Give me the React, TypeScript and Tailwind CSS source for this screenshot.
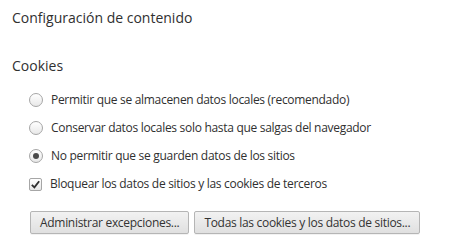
import type { ReactNode } from "react"

type Option = {
  label: string
  checked?: boolean
}

const radios: Option[] = [
  { label: "Permitir que se almacenen datos locales (recomendado)" },
  { label: "Conservar datos locales solo hasta que salgas del navegador" },
  { label: "No permitir que se guarden datos de los sitios", checked: true },
]

function Radio({ checked }: { checked?: boolean }) {
  return (
    <span className="flex h-[14px] w-[14px] shrink-0 items-center justify-center rounded-full border border-[#a6a6a6] bg-linear-to-b from-white to-[#e8e8e8]">
      {checked && <span className="h-[6px] w-[6px] rounded-full bg-[#4a4a4a]" />}
    </span>
  )
}

function Checkbox() {
  return (
    <span className="flex h-[13px] w-[13px] shrink-0 items-center justify-center rounded-[2px] border border-[#a6a6a6] bg-linear-to-b from-white to-[#e6e6e6]">
      <svg viewBox="0 0 12 12" className="h-[11px] w-[11px]">
        <path d="M2 6.5 L4.8 9.2 L10 2.5" fill="none" stroke="#2e2e2e" strokeWidth="2" />
      </svg>
    </span>
  )
}

function Row({ control, children }: { control: ReactNode; children: ReactNode }) {
  return (
    <div className="flex h-7 items-center gap-2 pl-[17px]">
      {control}
      <span>{children}</span>
    </div>
  )
}

function Button({ children }: { children: ReactNode }) {
  return (
    <button className="h-[23px] whitespace-nowrap rounded-[2px] border border-[#b5b5b5] bg-linear-to-b from-[#f2f2f2] to-[#e0e0e0] px-[9px] text-[12px] leading-none tracking-[-0.3px] text-[#333] shadow-[0_1px_0_rgba(0,0,0,0.05)]">
      {children}
    </button>
  )
}

export default function App() {
  return (
    <div className="h-[250px] w-[450px] bg-white px-3 pt-2 font-['Open_Sans',sans-serif] text-[12px] text-[#303030]">
      <h1 className="text-[14px] leading-5 font-normal">Configuración de contenido</h1>

      <h2 className="mt-7 text-[14px] leading-5 font-normal">Cookies</h2>

      <div className="mt-[10px] tracking-[-0.3px]">
        {radios.map((r) => (
          <Row key={r.label} control={<Radio checked={r.checked} />}>
            {r.label}
          </Row>
        ))}
        <Row control={<Checkbox />}>Bloquear los datos de sitios y las cookies de terceros</Row>
      </div>

      <div className="mt-[13px] flex gap-[5px] pl-[18px]">
        <Button>Administrar excepciones...</Button>
        <Button>Todas las cookies y los datos de sitios...</Button>
      </div>
    </div>
  )
}
